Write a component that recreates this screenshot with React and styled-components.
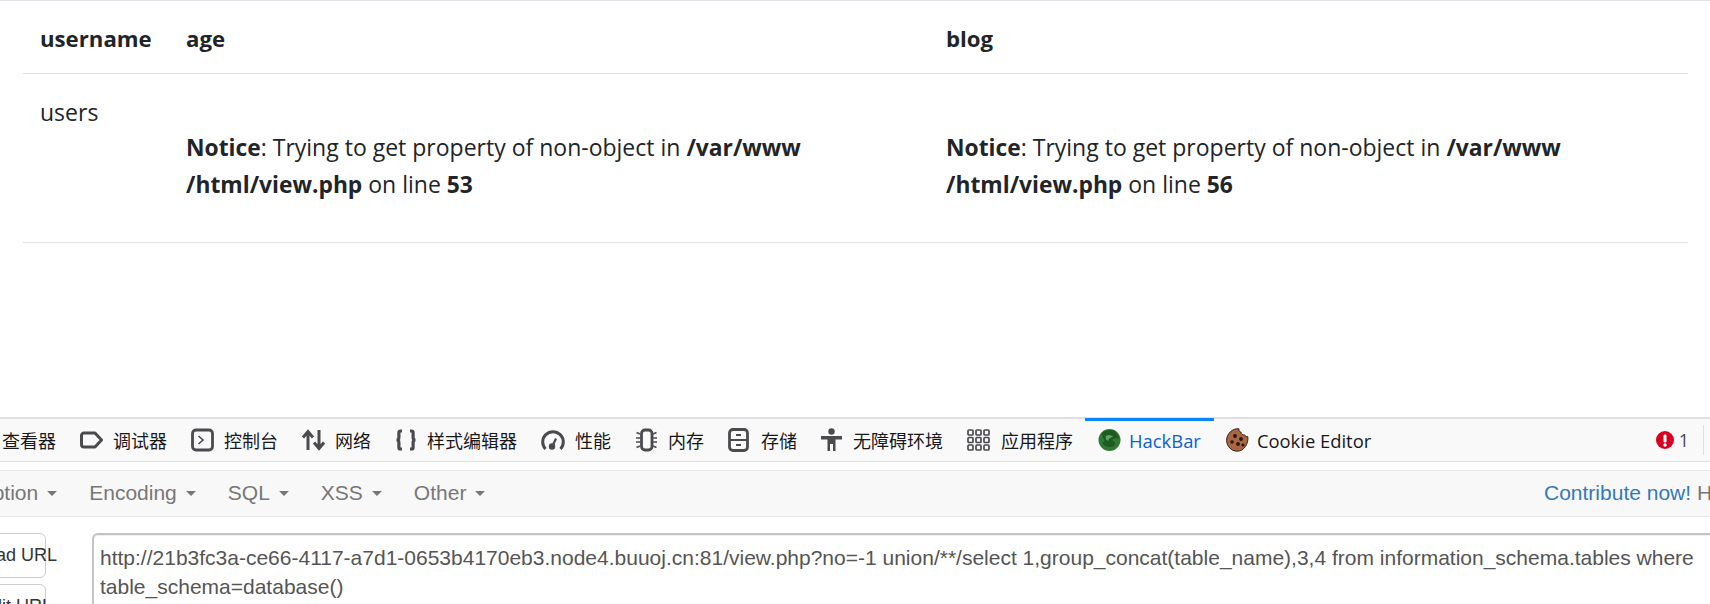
import React from "react";
import styled, { createGlobalStyle } from "styled-components";

const GlobalStyle = createGlobalStyle`
    html, body {
        margin: 0;
        padding: 0;
        height: 604px;
        overflow: hidden;
        background: #fff;
    }
`;

const Page = styled.div`
    width: 1710px;
    height: 604px;
    overflow: hidden;
    display: flex;
    flex-direction: column;
`;

// top part: the page that is being inspected
const ResultTable = styled.div`
    height: 417px;
    flex: none;
    padding: 0 22px 0 23px;
    box-sizing: border-box;
    border-top: 1px solid #dee2e6;
    font-family: "Open Sans", sans-serif;
    font-size: 23px;
    line-height: 36.5px;
    color: #212529;
`;

const Row = styled.div`
    display: grid;
    grid-template-columns: 146px 760px 1fr;
    border-bottom: 1px solid #dee2e6;
`;

const Cell = styled.div`
    padding: ${(p) => (p.$head ? "20px 18px 15.500px 17px" : `${p.$top || 18}px 18px 38px 17px`)};
    font-weight: ${(p) => (p.$head ? 700 : 400)};
    font-size: ${(p) => (p.$head ? "22.2px" : "23px")};
    white-space: nowrap;
    b {
        font-weight: 700;
        font-size: 22.8px;
    }
`;

// devtools tab strip
const TabBar = styled.div`
    height: 45px;
    flex: none;
    box-sizing: border-box;
    display: flex;
    background: #f9f9fa;
    border-top: 2px solid #e0e0e2;
    border-bottom: 1px solid #e0e0e1;
    font-family: "Open Sans", "Noto Sans CJK SC", sans-serif;
    font-size: 18px;
    color: #18181a;
`;

const Tab = styled.div`
    display: flex;
    align-items: center;
    gap: ${(p) => (p.$latin ? 8 : 10)}px;
    padding: 0 ${(p) => (p.$active ? 13 : 12)}px;
    position: relative;
    white-space: nowrap;
    color: ${(p) => (p.$active ? "#0a60d8" : "#18181a")};
    font-size: ${(p) => (p.$latin ? "18.4px" : "18px")};
    margin-left: ${(p) => p.$ml || 0}px;
    &::before {
        content: "";
        display: ${(p) => (p.$active ? "block" : "none")};
        position: absolute;
        top: -1px;
        left: 0;
        right: 0;
        height: 3px;
        background: #0a84ff;
    }
    svg {
        flex: none;
    }
`;

const TabSpacer = styled.div`
    flex: 1;
`;

const ErrorCount = styled.div`
    display: flex;
    align-items: center;
    gap: 5px;
    padding-right: 14px;
    color: #4a4a4f;
    border-right: 1px solid #e0e0e2;
    margin: 6px 6px 6px 0;
`;

const Gap = styled.div`
    height: 8px;
    flex: none;
`;

// hackbar panel
const MenuBar = styled.div`
    height: 47px;
    flex: none;
    box-sizing: border-box;
    display: flex;
    align-items: center;
    margin-left: -77px;
    padding-bottom: 2px;
    background: #f8f8f8;
    border-top: 1px solid #e7e7e7;
    border-bottom: 1px solid #e7e7e7;
    font-family: "Liberation Sans", sans-serif;
    font-size: 21px;
    color: #777;
    white-space: nowrap;
    overflow: hidden;
`;

const MenuItem = styled.div`
    display: flex;
    align-items: center;
    gap: 9px;
    padding: 0 16px;
    &::after {
        content: "";
        border-top: 5px solid #777;
        border-left: 5px solid transparent;
        border-right: 5px solid transparent;
        margin-top: 2px;
    }
`;

const MenuRight = styled.div`
    margin-left: auto;
    width: 166px;
    flex: none;
    overflow: hidden;
    a {
        color: #337ab7;
        text-decoration: none;
    }
`;

const Workspace = styled.div`
    flex: 1;
    display: flex;
    gap: 46px;
    padding-top: 16px;
    margin-left: -38px;
    font-family: "Liberation Sans", sans-serif;
    font-size: 21px;
    color: #333;
`;

const Buttons = styled.div`
    width: 84px;
    flex: none;
    display: flex;
    flex-direction: column;
    gap: 6px;
`;

const Button = styled.div`
    height: 45px;
    flex: none;
    box-sizing: border-box;
    padding-left: 13px;
    border: 1px solid #ccc;
    border-radius: 6px;
    background: #fff;
    display: flex;
    align-items: center;
    white-space: nowrap;
    font-size: 18px;
`;

const UrlBox = styled.div`
    flex: none;
    width: 1640px;
    height: 120px;
    box-sizing: border-box;
    border: 2px solid #c4c4c4;
    border-right: 0;
    border-radius: 6px 0 0 0;
    box-shadow: inset 0 1px 1px rgba(0, 0, 0, 0.075);
    padding: 8px 6px;
    line-height: 29px;
    color: #555;
`;

const Ic = ({ w = 24, h = 24, children }) => (
    <svg width={w} height={h} viewBox={`0 0 ${w} ${h}`} fill="none">
        {children}
    </svg>
);

const dark = "#4a4a4f";

const DebuggerIcon = () => (
    <Ic w={23}>
        <path d="M4 5h11l6.500 7-6.500 7H4a2.500 2.500 0 0 1-2.500-2.500v-9A2.500 2.500 0 0 1 4 5z" stroke={dark} strokeWidth="3" strokeLinejoin="round" />
    </Ic>
);

const ConsoleIcon = () => (
    <Ic w={23}>
        <rect x="1.500" y="2" width="20" height="20" rx="3.500" stroke={dark} strokeWidth="2.800" />
        <path d="M7.500 8l4.500 4-4.500 4" stroke={dark} strokeWidth="1.600" />
    </Ic>
);

const NetworkIcon = () => (
    <Ic w={23}>
        <path d="M6 22V4M1 9.500L6 3.500l5 6" stroke={dark} strokeWidth="3" />
        <path d="M17 2v18M12 14.500l5 6 5-6" stroke={dark} strokeWidth="3" />
    </Ic>
);

const StyleIcon = () => (
    <Ic w={22}>
        <path d="M7 3H5.500a1.600 1.600 0 0 0-1.600 1.600v4.900c0 1.300-.9 2.500-2.400 2.500 1.500 0 2.400 1.200 2.400 2.500v4.900a1.600 1.600 0 0 0 1.600 1.600H7" stroke={dark} strokeWidth="3.200" />
        <path d="M15 3h1.500a1.600 1.600 0 0 1 1.600 1.600v4.900c0 1.300.9 2.500 2.400 2.500-1.500 0-2.400 1.200-2.400 2.500v4.900a1.600 1.600 0 0 1-1.600 1.600H15" stroke={dark} strokeWidth="3.200" />
    </Ic>
);

const PerfIcon = () => (
    <Ic>
        <path d="M4.500 21A10.300 10.300 0 1 1 19.500 21" stroke={dark} strokeWidth="3" />
        <circle cx="11" cy="18.500" r="3.200" fill={dark} />
        <path d="M11.500 18L15 10.500" stroke={dark} strokeWidth="2.200" />
    </Ic>
);

const MemoryIcon = () => (
    <Ic w={23}>
        <rect x="6.500" y="2" width="10.500" height="20" rx="3.500" stroke={dark} strokeWidth="2.800" />
        <path d="M5 6L1.500 4.500M5 10H1M5 14H1M5 18l-3.500 1.500M18 6l3.500-1.500M18 10h4M18 14h4M18 18l3.500 1.500" stroke={dark} strokeWidth="1.600" />
    </Ic>
);

const StorageIcon = () => (
    <Ic w={23}>
        <rect x="1.500" y="1.500" width="18" height="21" rx="3.500" stroke={dark} strokeWidth="2.800" />
        <path d="M2 12h17M8 7h5M8 17h5" stroke={dark} strokeWidth="1.800" />
    </Ic>
);

const AccessIcon = () => (
    <Ic w={22}>
        <circle cx="10.500" cy="3.500" r="3.200" fill={dark} />
        <path d="M0 8h21v3.500h-6.500V23H12v-7H9v7H6.500V11.500H0z" fill={dark} />
    </Ic>
);

const AppIcon = () => (
    <Ic w={24}>
        {[2, 9.5, 17].map((y) =>
            [1, 9, 17].map((x) => (
                <rect key={`${x}-${y}`} x={x} y={y} width="5" height="5" rx="1" stroke={dark} strokeWidth="1.700" />
            ))
        )}
    </Ic>
);

const HackBarIcon = () => (
    <Ic w={23}>
        <circle cx="11.500" cy="12" r="11" fill="#2f7a32" />
        <path d="M4 5c3-3 9-4 13-2 1 3 4 5 4 8-3-2-5-1-7 1 2 1 4 3 2 6-4 2-9 1-12-3 3-1 3-3 1-5z" fill="#1f5a23" />
        <path d="M8 8c2-2 6-1 7 1-2 0-4 1-5 4-2-1-3-3-2-5z" fill="#56a957" />
    </Ic>
);

const CookieIcon = () => (
    <Ic w={23}>
        <path d="M13 .8c-.5 2 .6 3.300 2 3.300 0 2 1.800 3.300 3.500 2.700.5 1.300 1.800 2 3.300 1.800 1 7-3.800 14.600-10.500 14.600C5 23.200.6 18 .6 12.200.6 5.800 6.500 0 13 .8z" fill="#a9663f" stroke="#2c2320" strokeWidth="1" />
        <circle cx="9" cy="8" r="1.900" fill="#21160f" />
        <circle cx="15" cy="11" r="1.900" fill="#21160f" />
        <circle cx="6" cy="14" r="1.700" fill="#21160f" />
        <circle cx="12" cy="16" r="1.900" fill="#21160f" />
        <circle cx="17" cy="17" r="1.600" fill="#21160f" />
    </Ic>
);

const ErrorIcon = () => (
    <Ic w={18} h={18}>
        <circle cx="9" cy="9" r="9" fill="#d70022" />
        <rect x="7.500" y="3.500" width="3" height="8" rx="1.300" fill="#fff" />
        <circle cx="9" cy="14" r="1.700" fill="#fff" />
    </Ic>
);

const tabs = [
    { label: "调试器", icon: <DebuggerIcon /> },
    { label: "控制台", icon: <ConsoleIcon /> },
    { label: "网络", icon: <NetworkIcon /> },
    { label: "样式编辑器", icon: <StyleIcon /> },
    { label: "性能", icon: <PerfIcon /> },
    { label: "内存", icon: <MemoryIcon /> },
    { label: "存储", icon: <StorageIcon /> },
    { label: "无障碍环境", icon: <AccessIcon /> },
    { label: "应用程序", icon: <AppIcon /> },
];

const notice = (line) => (
    <>
        <br />
        <b>Notice</b>: Trying to get property of non-object in <b>/var/www</b>
        <br />
        <b>/html/view.php</b> on line <b>{line}</b>
    </>
);

const App = () => {
    return (
        <Page>
            <GlobalStyle />
            <ResultTable>
                <Row>
                    <Cell $head>username</Cell>
                    <Cell $head>age</Cell>
                    <Cell $head>blog</Cell>
                </Row>
                <Row>
                    <Cell $top={20}>users</Cell>
                    <Cell>{notice(53)}</Cell>
                    <Cell>{notice(56)}</Cell>
                </Row>
            </ResultTable>
            <TabBar>
                <Tab $ml={-10}>查看器</Tab>
                {tabs.map((t) => (
                    <Tab key={t.label}>
                        {t.icon}
                        {t.label}
                    </Tab>
                ))}
                <Tab $active $latin>
                    <HackBarIcon />
                    HackBar
                </Tab>
                <Tab $latin>
                    <CookieIcon />
                    Cookie Editor
                </Tab>
                <TabSpacer />
                <ErrorCount>
                    <ErrorIcon />1
                </ErrorCount>
            </TabBar>
            <Gap />
            <MenuBar>
                <MenuItem>Encryption</MenuItem>
                <MenuItem>Encoding</MenuItem>
                <MenuItem>SQL</MenuItem>
                <MenuItem>XSS</MenuItem>
                <MenuItem>Other</MenuItem>
                <MenuRight>
                    <a>Contribute now!</a> HackBar
                </MenuRight>
            </MenuBar>
            <Workspace>
                <Buttons>
                    <Button>Load URL</Button>
                    <Button>Split URL</Button>
                </Buttons>
                <UrlBox>
                    http://21b3fc3a-ce66-4117-a7d1-0653b4170eb3.node4.buuoj.cn:81/view.php?no=-1 union/**/select 1,group_concat(table_name),3,4 from information_schema.tables where table_schema=database()
                </UrlBox>
            </Workspace>
        </Page>
    );
};

export default App;
